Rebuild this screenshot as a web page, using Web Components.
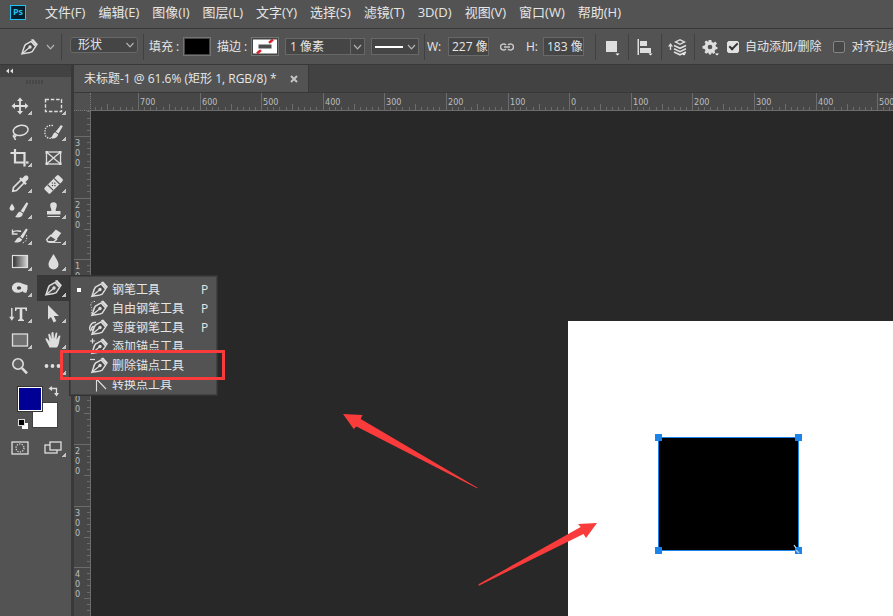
<!DOCTYPE html>
<html lang="zh-CN">
<head>
<meta charset="utf-8">
<title>未标题-1</title>
<style>
html,body{height:100%;margin:0}
body{background:#282828;color:#e6e6e6;font:12px/16px "Open Sans","Noto Sans CJK SC",sans-serif;overflow:hidden}
</style>
</head>
<body>
<ps-app>
  <ps-menubar slot="menu">
    <ps-menu-item>文件(F)</ps-menu-item><ps-menu-item>编辑(E)</ps-menu-item><ps-menu-item>图像(I)</ps-menu-item><ps-menu-item>图层(L)</ps-menu-item><ps-menu-item>文字(Y)</ps-menu-item><ps-menu-item>选择(S)</ps-menu-item><ps-menu-item>滤镜(T)</ps-menu-item><ps-menu-item>3D(D)</ps-menu-item><ps-menu-item>视图(V)</ps-menu-item><ps-menu-item>窗口(W)</ps-menu-item><ps-menu-item>帮助(H)</ps-menu-item>
  </ps-menubar>
  <ps-options slot="options"></ps-options>
  <ps-toolbox slot="tools">
    <ps-tool icon="move" label="移动"></ps-tool><ps-tool icon="marquee" label="选框"></ps-tool>
    <ps-tool icon="lasso" label="套索"></ps-tool><ps-tool icon="quick" label="快速选择"></ps-tool>
    <ps-tool icon="crop" label="裁剪"></ps-tool><ps-tool icon="frame" label="图框" single></ps-tool>
    <ps-tool icon="dropper" label="吸管"></ps-tool><ps-tool icon="heal" label="修复"></ps-tool>
    <ps-tool icon="brush" label="画笔"></ps-tool><ps-tool icon="stamp" label="图章"></ps-tool>
    <ps-tool icon="history" label="历史记录画笔"></ps-tool><ps-tool icon="eraser" label="橡皮擦"></ps-tool>
    <ps-tool icon="gradient" label="渐变"></ps-tool><ps-tool icon="blur" label="模糊"></ps-tool>
    <ps-tool icon="dodge" label="减淡"></ps-tool><ps-tool icon="pen" label="钢笔" active></ps-tool>
    <ps-tool icon="type" label="文字"></ps-tool><ps-tool icon="select" label="路径选择"></ps-tool>
    <ps-tool icon="rect" label="矩形"></ps-tool><ps-tool icon="hand" label="抓手"></ps-tool>
    <ps-tool icon="zoom" label="缩放" single></ps-tool><ps-tool icon="more" label="更多"></ps-tool>
    <ps-flyout slot="flyout">
      <ps-flyout-item icon="pen" key="P" current>钢笔工具</ps-flyout-item>
      <ps-flyout-item icon="freepen" key="P">自由钢笔工具</ps-flyout-item>
      <ps-flyout-item icon="curvepen" key="P">弯度钢笔工具</ps-flyout-item>
      <ps-flyout-item icon="addpen">添加锚点工具</ps-flyout-item>
      <ps-flyout-item icon="delpen">删除锚点工具</ps-flyout-item>
      <ps-flyout-item icon="convert">转换点工具</ps-flyout-item>
    </ps-flyout>
  </ps-toolbox>
  <ps-document slot="document">
    <ps-tab slot="tabs">未标题-1 @ 61.6% (矩形 1, RGB/8) *</ps-tab>
    <ps-artboard></ps-artboard>
  </ps-document>
</ps-app>

<script>
const PEN = '<g transform="rotate(2)"><path d="M-7.800 7C-6.500 3.500-6.300 0-4.600-2.300L1-5.600 5.600-.800 2.400 4.500C0 6.200-3.500 6.200-7.800 7Z" fill="#484848" stroke="#dedede" stroke-width="1.500"/><path d="M.6-7.200L2.900-8.200 7.800-3.100 6.500-1Z"/><path d="M-7 6.300L-.5.5" stroke="#dedede" stroke-width="1.300"/><circle cx="0" cy="0" r="1.700"/></g>';
const ICONS = {
 move:'<path d="M0-8.500L3-5H.9V-.9H5V-3L8.500 0 5 3V.9H.9V5H3L0 8.500-3 5H-.9V.9H-5V3L-8.500 0-5-3V-.9H-.9V-5H-3Z"/>',
 marquee:'<rect x="-8.500" y="-6.500" width="16" height="12" fill="none" stroke="#dedede" stroke-width="1.400" stroke-dasharray="3.500 1.800"/>',
 lasso:'<g fill="none" stroke="#dedede" stroke-width="1.500"><ellipse cx="1" cy="-1.500" rx="7.500" ry="5" transform="rotate(-12)"/><path d="M-6 3C-7.500 4-6 6-4.500 4.500S-5.500 1.500-6.300 3.500C-6.500 5-5 6-4.500 8"/></g>',
 quick:'<path d="M-1-6.500C-6-7-8.500-5-9-2V2C-8.500 6-4 7-1.500 6" fill="none" stroke="#dedede" stroke-width="1.400" stroke-dasharray="1.400 1.200"/><path d="M7-7L8.800-5.800 4.500 1.500 1.700-.3Z"/><path d="M1.200.2L4.200 2.400C3.300 6.300-.5 7-3.500 6-1.200 5-1.500 1.200 1.200.2Z"/>',
 crop:'<path d="M-5-9V4.500H4.500M-9.500-5H4.500V8.500" fill="none" stroke="#dedede" stroke-width="2.200"/><path d="M6 3.400H8.500V5.600H6Z"/>',
 frame:'<g fill="none" stroke="#dedede" stroke-width="1.300"><rect x="-7.500" y="-6" width="14" height="12"/><path d="M-7.500-6L6.500 6M6.500-6L-7.500 6"/></g><path d="M-8.500-7h2.500v2.500h-2.500zM5-7h2.500v2.500h-2.500zM-8.500 4.500h2.500v2.500h-2.500zM5 4.500h2.500v2.500h-2.500z"/>',
 dropper:'<path d="M1.500-4.500L-6.500 3.500-7.200 7.200-3.500 6.500 4.500-1.500" fill="none" stroke="#dedede" stroke-width="1.700"/><path d="M-.8-5.200L.700-6.700 2-5.400 4.500-8C7.200-9.500 9.500-7 8-4.500L5.400-2 6.800-.600 5.200.900Z"/>',
 heal:'<g transform="rotate(-45)"><rect x="-10.500" y="-4" width="20" height="8" rx="1.500"/><path d="M-5-4V4M4-4V4" stroke="#535353" stroke-width="1.200"/><path d="M-2.700-.6h1.200v1.200h-1.200zM.6-.6h1.200v1.200h-1.200zM-1.100-2.500h1.200v1.200h-1.200zM-1.100 1.300h1.200v1.200h-1.200z" fill="#333"/></g>',
 brush:'<path d="M6.500-7.800L8.300-6.600 3.500 2.800.7 1Z"/><path d="M.2 1.600L3 3.700C2 7.500-1.500 8-5 7-3 6-3 2.500.2 1.600Z"/><path d="M-8-6.500C-6-3.500-5.500-2.500-5.500-1.200A2.600 2.600 0 0 1-10.500-1.200C-10.500-2.500-9.500-4-8-6.500Z"/>',
 stamp:'<path d="M-3.800-4.500A3.300 3.300 0 0 1 2.800-4.500C2.800-2 1.300-1.500 1.800 1H6.500V4.500H-7V1H-2.700C-2.200-1.500-3.800-2-3.800-4.500Z"/><path d="M-6.500 6H6V7H-6.500Z"/>',
 history:'<path d="M6-7.500L7.800-6.500 2.800 2.500.2.800Z"/><path d="M-.7 1.200L2.200 3.500C1 6.500-2.500 7.200-6 6-4 5.200-4 2-.7 1.200Z"/><path d="M-7.500-3.500C-4-7-1-4 1-5M-7.500-6.500V-2H-2.500" fill="none" stroke="#dedede" stroke-width="1.400"/><path d="M6.500-1C7.500 3 6 6 2.500 7" fill="none" stroke="#dedede" stroke-dasharray="1.300 1.500"/>',
 eraser:'<path d="M1.800-6.500L7.200-3 2.500 3.500-3.500-.600Z"/><path d="M-3.500-.600L2.500 3.500-.200 5.800-6.500 5.500-7.300 3.500Z" fill="none" stroke="#dedede" stroke-width="1.400"/><path d="M-5.500 6.100H7V7H-5.500Z"/>',
 gradient:'<defs><linearGradient id="g"><stop stop-color="#2c2c2c"/><stop offset="1" stop-color="#d8d8d8"/></linearGradient></defs><rect x="-7.500" y="-6.500" width="15" height="12" fill="url(#g)" stroke="#dedede" stroke-width="1.200"/>',
 blur:'<path d="M-.5-8C2-3.500 4.500-.500 4.500 2.500A5 5 0 0 1-5.500 2.500C-5.500-.500-3-3.500-.500-8Z"/>',
 dodge:'<path d="M-8 .5C-8.500-5.500-1-6.500 2-4.500L7.500-2.800 7.500 1 6.500 4.500C4.500 5 3.500 4.500 2.500 3.300-1 6-7.500 5-8 .5Z"/><ellipse cx="-1" cy="0" rx="2.200" ry="1.800" fill="#484848"/>',
 pen:PEN,
 type:'<path d="M-5-6.500H7V-3H6L5-5H2.300V5L4 6V7H-2V6L-.3 5V-5H-3L-4-3H-5Z"/><path d="M-8.200-6V4" stroke="#dedede" stroke-width="1.400"/><path d="M-10.800 2.800H-5.600L-8.200 6.800Z"/>',
 select:'<path d="M-6-9V5.500L-3 3-.3 8.500 2.300 7-.2 2H5Z"/>',
 rect:'<rect x="-7.500" y="-6" width="15" height="12" fill="#717171" stroke="#dedede" stroke-width="1.300"/>',
 hand:'<path d="M-4.500 7.500C-5.500 4.500-9-.5-8.500-1.500-7-2.500-5.800.2-4.500 1.500L-5.800-5.500C-5.500-6.800-4-6.500-3.700-5.200L-2.500-.7-2.600-7C-2.200-8.300-.5-8.200-.4-7L0-.9 1.600-6.800C2-8 3.500-7.400 3.300-6.200L2.500-.2 4.700-4C5.500-5 6.700-4.400 6.300-3.200 5 1 5.500 5 2.800 7.500Z"/>',
 zoom:'<circle cx="-2" cy="-2" r="5.200" fill="#606060" stroke="#dedede" stroke-width="1.600"/><path d="M2 2.200L7 7.300" stroke="#dedede" stroke-width="2.600"/>',
 more:'<circle cx="-7.500" cy="0" r="1.900"/><circle cx="-1.500" cy="0" r="1.900"/><circle cx="4.500" cy="0" r="1.900"/>',
 freepen:PEN+'<path d="M-5-7C-9-7-10-4-8.500-1S-10 5-8 7" fill="none" stroke="#dedede" stroke-dasharray="1.200 1.500"/>',
 curvepen:PEN+'<path d="M-4-5C-9-6-12 1-9 3.500M-6-1C-9-1-9 4-6.500 2" fill="none" stroke="#dedede" stroke-width="1.400"/>',
 addpen:PEN+'<path d="M-10-5.500H-5M-7.500-8V-3" stroke="#dedede" stroke-width="1.200"/>',
 delpen:PEN+'<path d="M-10-6H-5" stroke="#dedede" stroke-width="1.200"/>',
 convert:'<path d="M-3.500 7V-5.500L6 4.500" fill="none" stroke="#dedede" stroke-width="1.100"/>',
 chev:'<path d="M-3.500-2L0 1.800 3.500-2" fill="none" stroke="#b4b4b4" stroke-width="1.200"/>',
 link:'<g fill="none" stroke="#c8c8c8" stroke-width="1.500"><path d="M-1-2C-3-4-6.500-3-6.500 0S-3 4-1 2M1-2C3-4 6.500-3 6.500 0S3 4 1 2M-3 0H3"/></g>',
 op:'<path d="M-6-6H5V5H-6Z"/><path d="M3.500 6.500H7.500L5.500 8.500Z" fill="#fff"/>',
 align:'<path d="M-7.500-8H-6V8H-7.500ZM-5-6H2V-1H-5ZM-5 1H6V6H-5Z"/><path d="M3.500 6.500H7.500L5.500 8.500Z" fill="#fff"/>',
 stack:'<g transform="translate(-1)"><path d="M3-8L9-5 3-2-3-5Z"/><path d="M3-6.500L6-5 3-3.500 0-5Z" fill="#535353"/><path d="M-3-1.500L3 1.300 9-1.500M-3 1.800L3 4.600 9 1.800M-3 5L3 7.800 9 5" fill="none" stroke="#dedede" stroke-width="1.500"/><path d="M-6.500 3V-1" stroke="#dedede" stroke-width="1.300"/><path d="M-9-.5L-6.500-4-4-.5Z"/><path d="M5 6.500H9L7 8.500Z" fill="#fff"/></g>',
 gear:'<path d="M-1.300-7H1.300L1.800-5 3.600-4.200 5.200-5.500 7-3.500 5.500-1.800 6-.2 7.500.2V2L5.500 2.500 4.500 4 5.200 5.600 3.500 7 1.800 5.500 1 7.500H-1L-1.800 5.500-3.800 6.800-5.500 5.200-4.500 3.300-5.500 2-7.500 1.500V-1L-5.500-1.500-4.500-3.200-5.500-5-3.500-6.500-1.800-5Z"/><circle cx="0" cy="0" r="2.300" fill="#535353"/><path d="M5 6.500H9L7 8.500Z" fill="#fff"/>',
 swap:'<path d="M-3-2.500H2.500V3" fill="none" stroke="#dedede" stroke-width="1.300"/><path d="M-2-5V0L-5.500-2.500ZM0 2H5L2.500 5.500Z"/>',
 reset:'<rect x="-1" y="-1" width="6" height="6" fill="#fff"/><rect x="-4.500" y="-4.500" width="6" height="6" fill="#000" stroke="#dedede"/>',
 mask:'<rect x="-8" y="-6" width="16" height="12" fill="none" stroke="#dedede" stroke-width="1.300"/><circle r="4" fill="none" stroke="#dedede" stroke-width="1.200" stroke-dasharray="1.300 1.200"/>',
 screen:'<rect x="-9" y="-3" width="12" height="8" fill="none" stroke="#dedede" stroke-width="1.300"/><rect x="-4" y="-6" width="11" height="8" fill="#535353" stroke="#dedede" stroke-width="1.300"/>',
 nofill:'<path d="M-12-7H12V7H-12Z" fill="#fff"/><path d="M-8 7L-4 3.500M4-3.500L8-7" stroke="#d8242f" stroke-width="2.500"/><path d="M-7-2.500H7V2.500H-7Z" fill="#4d4d4d" stroke="#fff"/>',
 line:'<path d="M-14-1H14V1H-14Z" fill="#fff"/>',
 close:'<path d="M-3-3L3 3M3-3L-3 3" stroke="#c4c4c4" stroke-width="2"/>',
 collapse:'<path d="M-.5-2.500V2.500L-3.500 0ZM3.500-2.500V2.500L.5 0Z"/>'
};
const svg=(n,w,h)=>`<svg width="${w}" height="${h}" viewBox="${-w/2} ${-h/2} ${w} ${h}" fill="#dedede" aria-hidden="true">${ICONS[n]}</svg>`;
const BASE=':host,*{box-sizing:border-box}svg{display:block}button,input,select{font:inherit;color:inherit;margin:0;padding:0;border:0;background:none;border-radius:0}';
const define=(name,render,live)=>customElements.define(name,class extends HTMLElement{
  connectedCallback(){
    if(this.shadowRoot)return;
    const r=this.attachShadow({mode:'open'});
    const draw=()=>{ r.innerHTML=`<style>${BASE}</style>`+render(this); };
    draw();
    if(live)addEventListener('resize',draw);
  }
});

define('ps-app',()=>`<style>
:host{display:grid;grid-template:29px 36px 1fr/74px 1fr;height:100vh;overflow:hidden}
.m,.o{grid-column:1/-1;min-width:0}.t{position:relative;z-index:2}.d{min-width:0;min-height:0;display:grid}</style>
<header class="m"><slot name="menu"></slot></header><div class="o"><slot name="options"></slot></div><div class="t"><slot name="tools"></slot></div><main class="d"><slot name="document"></slot></main>`);

define('ps-menubar',()=>`<style>
:host{display:flex;align-items:center;height:29px;padding:0 10px 4px;background:#535353;border-bottom:1px solid #383838}
.logo{width:16px;height:15px;border:1px solid #22c3f3;background:#04202e;color:#22c3f3;font:700 9px/12px "Open Sans",sans-serif;text-align:center;margin-right:19px}
nav{display:flex;gap:13px;font-size:13px}</style><div class="logo">Ps</div><nav><slot></slot></nav>`);
define('ps-menu-item',()=>`<style>:host{display:block}button{display:block;white-space:nowrap;line-height:20px}</style><button type="button"><slot></slot></button>`);

define('ps-options',()=>`<style>
:host{display:flex;align-items:center;height:36px;padding-left:18px;background:#535353;border-bottom:1px solid #383838;white-space:nowrap;overflow:hidden}
:host>*{flex:none}
.tool{display:flex;width:38px;align-items:center;justify-content:space-between}
hr{width:1px;height:26px;border:0;background:#414141;margin:0 5px}
hr.tight{margin-right:2px}
.box{display:flex;align-items:center;height:17px;border:1px solid #686868;background:#454545}
.shape{position:relative;width:68px;height:16px;border-radius:3px;margin:0 0 4px 3px}
select{appearance:none;width:100%;padding-left:7px;line-height:14px;outline:0}
.shape svg{position:absolute;right:1px;pointer-events:none}
.lab{width:34px}
.sw{width:28px;height:19px;border:1px solid #747474;background:#444;padding:1px;display:grid;place-items:center;margin-right:6px}
.black:before{content:"";width:24px;height:15px;background:#000}
.size{width:80px;margin-right:6px}.size input{flex:1;min-width:0;padding-left:4px}.size button{border-left:1px solid #686868;height:15px;width:14px;display:grid;place-items:center}
.line{width:48px;justify-content:space-between;padding:0 1px}
.num{width:41px;padding-left:3px;height:19px}.num input{width:100%}
.last{margin-right:6px}
.w{width:21px}.h{width:17px}.ln{margin:0 12px 0 11px}
.ic{width:22px;display:grid;place-items:center}
.gear{margin-right:7px}
input[type=checkbox]{appearance:none;width:12px;height:12px;border:1px solid #858585;border-radius:2px;background:#474747;margin:0 6px 0 0;display:grid;place-items:center}
input[type=checkbox]:checked{background:#e2e2e2;border-color:#e2e2e2}
input:checked:before{content:"";width:7px;height:3px;border:solid #333;border-width:0 0 2px 2px;rotate:-45deg;margin-bottom:2px}
.chk{display:flex;align-items:center;margin-right:12px}
</style>
<button class="tool" type="button" aria-label="钢笔工具预设"><span>${svg('pen',24,22)}</span>${svg('chev',11,10)}</button><hr>
<span class="box shape"><select aria-label="模式"><option>形状</option></select>${svg('chev',12,10)}</span><hr>
<span class="lab">填充 :</span><button class="sw black" type="button" aria-label="填充"></button>
<span class="lab">描边 :</span><button class="sw" type="button" aria-label="描边">${svg('nofill',24,15)}</button>
<span class="box size"><input aria-label="描边宽度" value="1 像素"><button type="button" aria-label="展开">${svg('chev',11,10)}</button></span>
<button class="box line" type="button" aria-label="线型">${svg('line',32,8)}${svg('chev',11,10)}</button><hr class="tight">
<label class="w" for="w">W:</label><span class="box num"><input id="w" value="227 像素"></span>
<button class="ln" type="button" aria-label="链接">${svg('link',14,12)}</button>
<label class="h" for="h">H:</label><span class="box num last"><input id="h" value="183 像素"></span><hr>
<button class="ic" type="button" aria-label="路径操作">${svg('op',20,22)}</button><hr>
<button class="ic" type="button" aria-label="对齐">${svg('align',20,22)}</button><hr>
<button class="ic" type="button" aria-label="排列">${svg('stack',20,22)}</button><hr>
<button class="gear" type="button" aria-label="设置">${svg('gear',20,22)}</button>
<label class="chk"><input type="checkbox" checked>自动添加/删除</label><label class="chk"><input type="checkbox">对齐边缘</label>`);

define('ps-toolbox',()=>`<style>
:host{display:block;position:relative;height:100%;background:#535353;border-right:3px solid #393939;padding-left:3px}
.head{height:12px;background:#424242;margin-left:-3px;padding:0 4px;display:flex;align-items:center}
.grip{height:16px;padding:3px 0 0 23px}.grip:before{content:"";display:block;width:18px;height:4px;background:repeating-linear-gradient(90deg,#474747 0 2px,#535353 2px 3px)}
.grid{display:grid;grid-template-columns:34px 34px}
.colors{position:relative;height:56px}
.colors button{position:absolute}
.fg{left:15px;top:8px;width:24px;height:24px;background:#000094;border:1px solid #fff!important;outline:1px solid #333;z-index:1}
.bg{left:30px;top:24px;width:24px;height:24px;background:#fff;outline:1px solid #414141}
.swap{left:45px;top:6px}.reset{left:14px;top:39px}
::slotted(ps-flyout){position:absolute;left:70px;top:211px}
.call{position:absolute;left:60px;top:285px;width:165px;height:30px;border:3px solid #f93b3b;pointer-events:none;z-index:4}
</style><div class="head">${svg('collapse',11,8)}</div><div class="grip"></div><div class="grid"><slot></slot></div>
<div class="colors"><button class="fg" type="button" aria-label="前景色"></button><button class="bg" type="button" aria-label="背景色"></button><button class="swap" type="button" aria-label="切换颜色">${svg('swap',12,12)}</button><button class="reset" type="button" aria-label="默认颜色">${svg('reset',12,12)}</button></div>
<div class="grid"><ps-tool icon="mask" label="快速蒙版" single></ps-tool><ps-tool icon="screen" label="屏幕模式"></ps-tool></div>
<slot name="flyout"></slot><div class="call"></div>`);

define('ps-tool',e=>`<style>:host{display:block}:host([active]){background:#383838}button{display:block;position:relative;width:34px;height:26px}
i{position:absolute;left:25px;top:18px;width:4px;height:4px;background:linear-gradient(135deg,transparent 50%,#c4c4c4 50%)}
:host([single]) i{display:none}</style>
<button type="button" aria-label="${e.getAttribute('label')}">${svg(e.getAttribute('icon'),34,26)}<i></i></button>`);

define('ps-flyout',()=>`<style>:host{display:block;width:147px;padding:3px 0 0;background:#535353;border:1px solid #424242;box-shadow:0 0 0 1px #333;z-index:3}</style><slot></slot>`);
define('ps-flyout-item',e=>`<style>:host{display:block}button{display:grid;grid-template-columns:17px 24px 1fr 15px;align-items:center;width:100%;height:19px;text-align:left;white-space:nowrap;line-height:18px}
.dot{width:4px;height:4px;margin-left:6px}:host([current]) .dot{background:#fff}.ic{overflow:hidden;height:19px}</style>
<button type="button"><span class="dot"></span><span class="ic">${svg(e.getAttribute('icon'),24,19)}</span><span><slot></slot></span><span>${e.getAttribute('key')||''}</span></button>`);

define('ps-document',()=>`<style>
:host{display:grid;grid-template:28px 18px 1fr/17px 1fr;min-width:0;min-height:0;overflow:hidden}
.tabs{grid-column:1/-1;background:#424242;display:flex;border-bottom:1px solid #383838}
.corner{background:#505050;border-right:1px dotted #777;border-bottom:1px dotted #777}
.stage{min-width:0;min-height:0;overflow:hidden;background:#282828}</style>
<div class="tabs"><slot name="tabs"></slot></div><div class="corner"></div><ps-ruler start="47" axis="x"></ps-ruler><ps-ruler start="25" axis="y"></ps-ruler><div class="stage"><slot></slot></div>`);
define('ps-tab',()=>`<style>:host{display:flex;align-items:center;gap:11px;height:27px;padding:1px 8px 0 10px;background:#535353;border-right:1px solid #383838;white-space:nowrap}
</style><span><slot></slot></span><button type="button" aria-label="关闭">${svg('close',12,12)}</button>`);

define('ps-ruler',e=>{
  const x=e.getAttribute('axis')==='x';
  const start=+e.getAttribute('start');
  const zero=x?7:3, unit=61.6;
  const room=(x?innerWidth-91:innerHeight-111)-start;
  const cell=(size,label)=>{
    let t='';
    for(let k=0;k<10;k++){
      const p=label===null?Math.round(size-(10-k)*unit/10):Math.round(k*unit/10);
      if(p<0)continue;
      const l=label!==null&&k===0?17:(k===5?6:3);
      t+=x?`<path d="M${p} ${17-l}h1V17h-1z"/>`:`<path d="M${17-l-1} ${p}V${p+1}H16V${p}z"/>`;
    }
    const s=x?`width="${size}" height="17"`:`width="16" height="${size}"`;
    const txt=label===null?'':x?`<span>${label}</span>`:`<span>${String(label).split('').join('<br>')}</span>`;
    return `<div class="c" style="flex-basis:${size}px"><svg ${s} fill="#6c6c6c">${t}</svg>${txt}</div>`;
  };
  let out=cell(start,null);
  for(let i=0;Math.round(i*unit)<room;i++)
    out+=cell(Math.round((i+1)*unit)-Math.round(i*unit),Math.abs(i-zero)*100);
  return `<style>:host{display:flex;flex-direction:${x?'row':'column'};min-width:0;min-height:0;overflow:hidden;background:#474747;border-${x?'bottom':'right'}:1px solid #6c6c6c;color:#bdbdbd;font-family:"DejaVu Sans Condensed","DejaVu Sans",sans-serif;font-size:9px;line-height:${x?'14px':'10px'}}
  .c{flex:none;display:grid}.c>*{grid-area:1/1}span{padding:${x?'2px 0 0 2px':'2px 0 0 1px'}}</style>${out}`;
},true);

define('ps-artboard',()=>`<style>
:host{display:block;position:relative;height:100%}
.page{position:absolute;left:477px;top:210px;right:0;bottom:0;background:#fff}
.shape{position:absolute;left:90px;top:116px;width:141px;height:114px;background:#000;border:1px solid #1c83e8}
.shape i{position:absolute;width:7px;height:7px;background:#1c83e8}
.a{left:-4px;top:-4px}.b{right:-4px;top:-4px}.c{left:-4px;bottom:-4px}.d{right:-4px;bottom:-4px}
.cur{position:absolute;right:-4px;bottom:-4px}
.arrows{position:absolute;left:0;top:0}
</style><div class="page"><div class="shape"><i class="a"></i><i class="b"></i><i class="c"></i><i class="d"></i><svg class="cur" width="9" height="11"><path d="M1 2L3 5M3 7L6 10" fill="none" stroke="#b9d6ee" stroke-width="1.300"/></svg></div></div>
<svg class="arrows" width="560" height="500" viewBox="91 111 560 500" fill="#f93b3b"><path d="M343 414L362.500 415 360.700 419 478 488 477 488.300 356.500 426.500 353.700 429Z"/><path d="M597 523L578 524 580.700 527 478.500 584.300 478.800 585.800 583.500 534 586 538Z"/></svg>`);
</script>
</body>
</html>
